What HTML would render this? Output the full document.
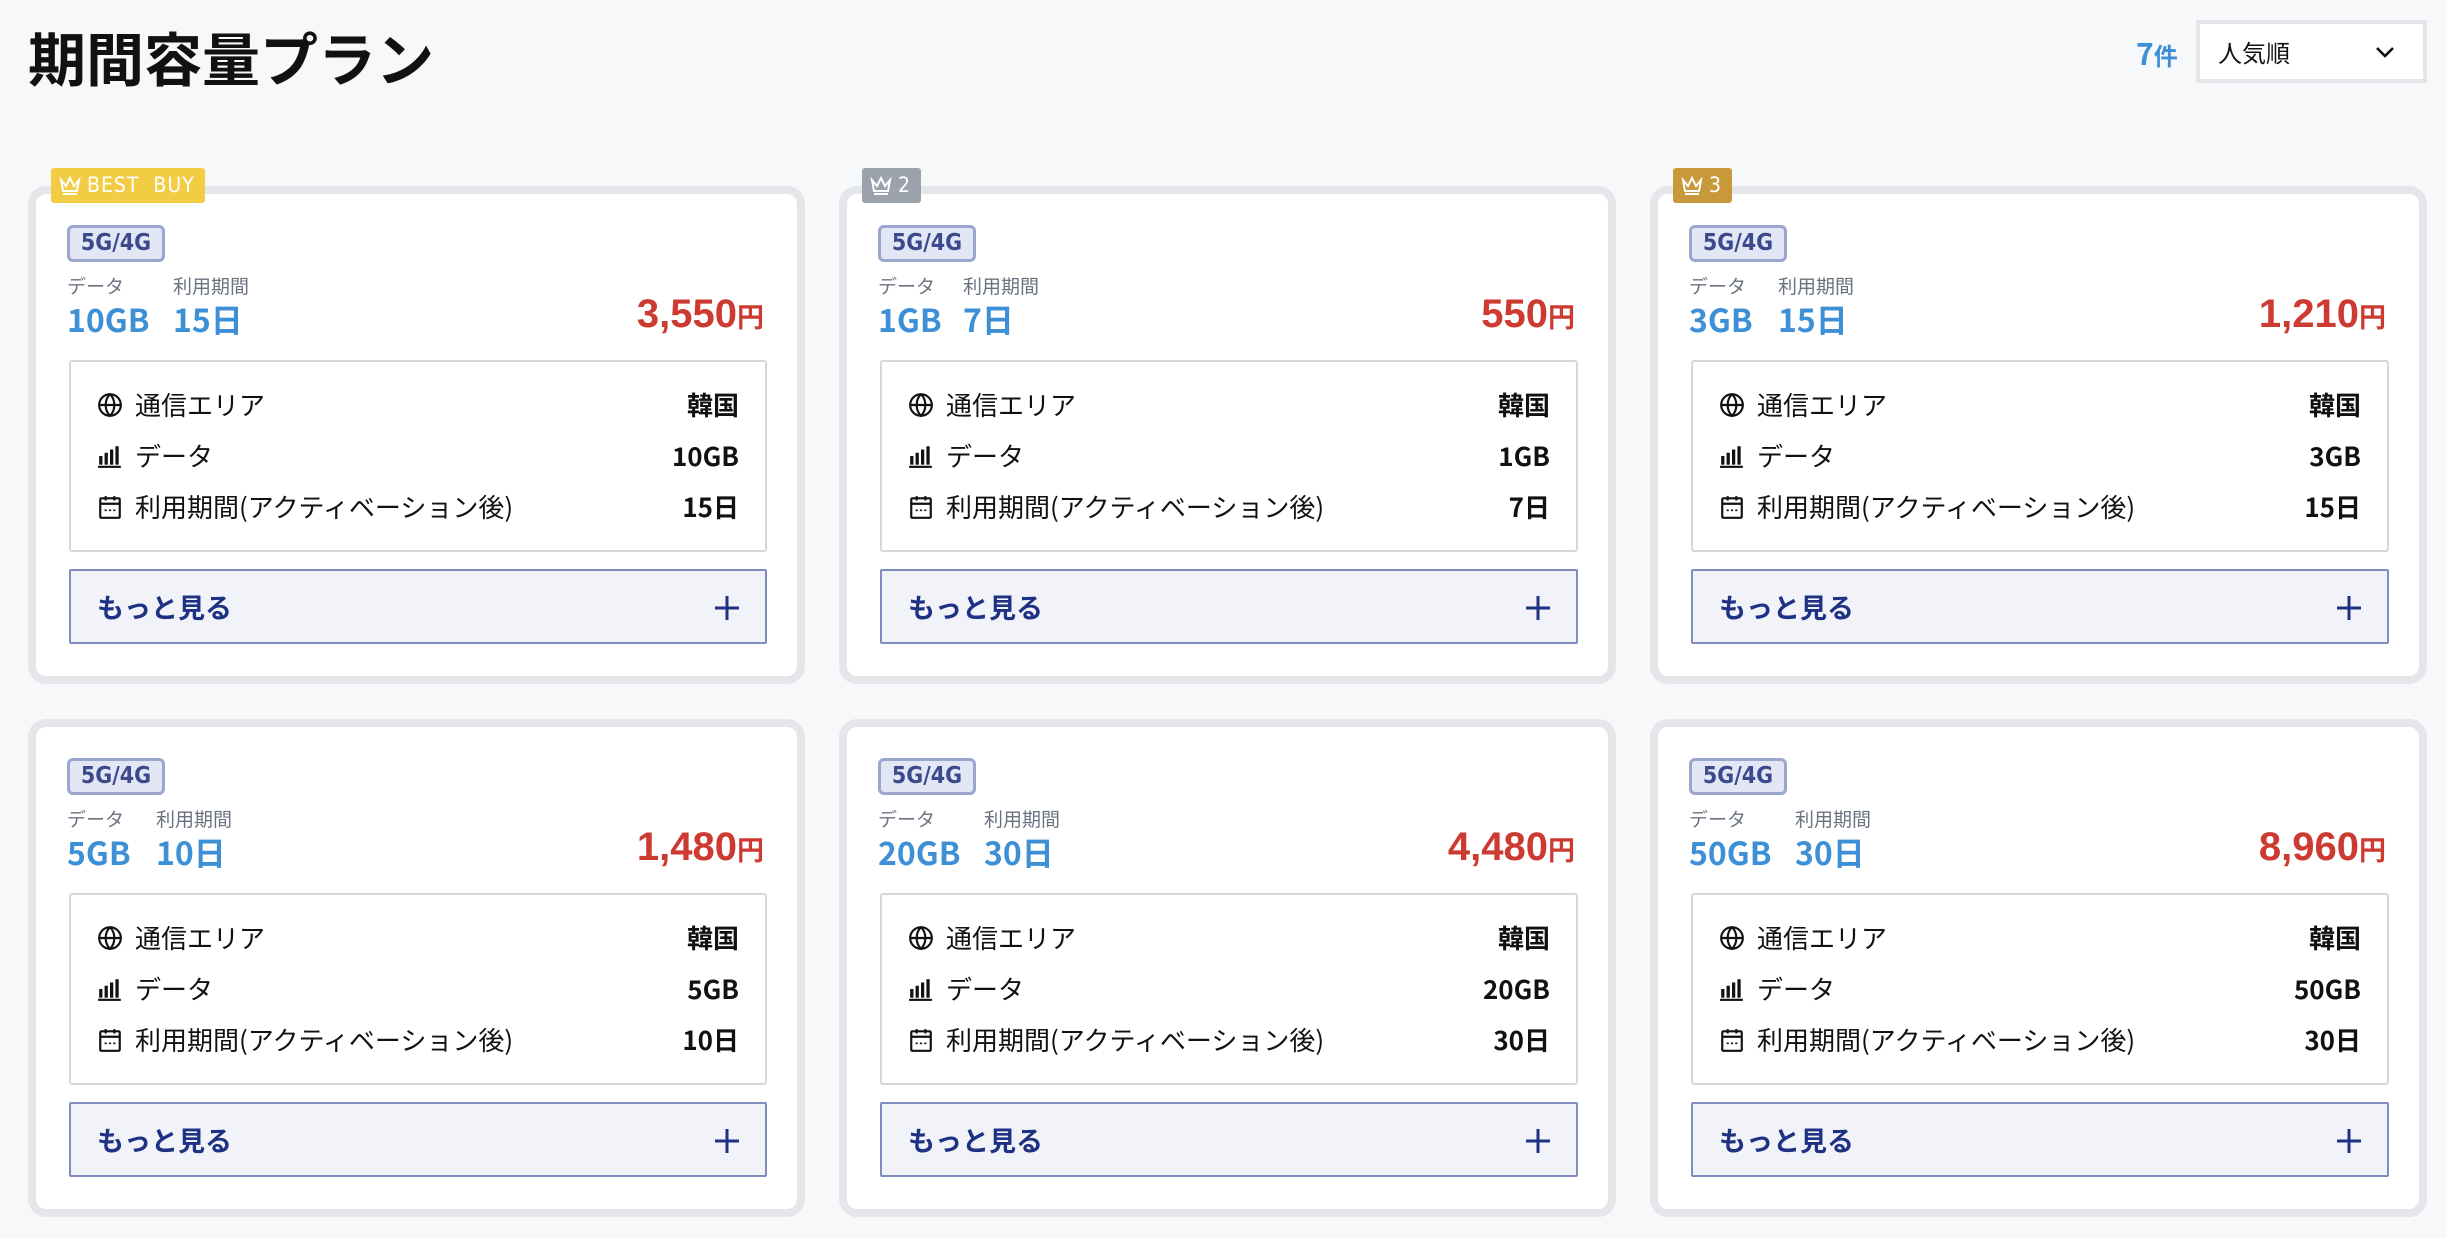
<!DOCTYPE html>
<html><head><meta charset="utf-8"><style>
*{box-sizing:border-box;margin:0;padding:0}
body{width:2446px;height:1238px;background:#f7f8fa;font-family:"Liberation Sans","Noto Sans CJK JP",sans-serif;position:relative;overflow:hidden;color:#111}
h1{position:absolute;left:28px;top:14px;font-size:58px;font-weight:700;letter-spacing:0px;font-family:"Noto Sans CJK JP",sans-serif}
.cnt{position:absolute;left:2136px;top:30px;color:#3d8fd6;font-size:30px;font-weight:700;font-family:"Noto Sans CJK JP",sans-serif}
.cnt small{font-size:24px}
.sel{position:absolute;left:2196px;top:20px;width:231px;height:63px;background:#fff;border:4px solid #e3e5e9;font-size:24px;padding:12px 0 0 18px;font-family:"Noto Sans CJK JP",sans-serif;line-height:32px}
.sel svg{position:absolute;right:28px;top:22px}
.card{position:absolute;width:777px;height:498px;background:#fff;border:8px solid #e4e6ea;border-radius:18px;font-family:"Noto Sans CJK JP",sans-serif}
.badge{position:absolute;left:15px;top:-26px;height:35px;color:#fff;font-size:21px;line-height:35px;padding:0 10px 0 8px;border-radius:3px;display:flex;align-items:center;gap:6px;font-family:"DejaVu Sans Condensed","Liberation Sans",sans-serif;letter-spacing:1px}
.tag{position:absolute;left:31px;top:31px;width:98px;height:37px;background:#e2e6f5;border:3px solid #9ba6cf;border-radius:6px;color:#3c4a8c;font-weight:700;font-size:23px;text-align:center;line-height:31px;font-family:"DejaVu Sans Condensed",sans-serif}
.lab{position:absolute;top:78px;font-size:19px;color:#6b7280}
.val{position:absolute;top:102px;font-size:32px;color:#3d8fd6;font-weight:700}
.price{position:absolute;right:33px;top:98px;font-size:40px;color:#cc3a31;font-weight:700;font-family:"Liberation Sans","Noto Sans CJK JP",sans-serif}
.price span{font-size:27px;font-family:"Noto Sans CJK JP",sans-serif}
.box{position:absolute;left:33px;top:166px;width:698px;height:192px;border:2px solid #d6d8dc;border-radius:3px;padding:17px 26px 0 26px}
.row{display:flex;align-items:center;height:51px;font-size:26px}
.row svg{margin-right:12px;flex:none}
.row .r{margin-left:auto;font-weight:700}
.btn{position:absolute;left:33px;top:375px;width:698px;height:75px;background:#f1f3f9;border:2px solid #7f8cc0;border-radius:2px;color:#1e3183;font-weight:700;font-size:27px;padding-left:26px;line-height:71px}
.btn svg{position:absolute;right:26px;top:25px}
</style></head><body>
<h1>期間容量プラン</h1>
<div class="cnt">7<small>件</small></div>
<div class="sel">人気順<svg width="20" height="12" viewBox="0 0 20 12"><path d="M2 2l8 8 8-8" stroke="#111" stroke-width="2.6" fill="none"/></svg></div>

<div class="card" style="left:28px;top:186px">
<div class="badge" style="background:#f2cc42"><svg width="22" height="20" viewBox="0 0 22 20"><path d="M2 4l5 6 4-8 4 8 5-6-2 11H4z M4 18h14" stroke="#fff" stroke-width="2" fill="none"/></svg>BEST&nbsp; BUY</div>
<div class="tag">5G/4G</div><div class="lab" style="left:31px">データ</div><div class="lab" style="left:137px">利用期間</div>
<div class="val" style="left:31px">10GB</div><div class="val" style="left:137px">15日</div>
<div class="price">3,550<span>円</span></div>
<div class="box">
<div class="row"><svg width="26" height="26" viewBox="0 0 24 24" fill="none" stroke="#111" stroke-width="2"><circle cx="12" cy="12" r="10"/><path d="M2 12h20M12 2c3 3 4 7 4 10s-1 7-4 10c-3-3-4-7-4-10s1-7 4-10"/></svg>通信エリア<span class="r">韓国</span></div>
<div class="row"><svg width="26" height="26" viewBox="0 0 24 24" fill="#111"><rect x="2" y="12" width="3" height="8"/><rect x="7" y="9" width="3" height="11"/><rect x="12" y="6" width="3" height="14"/><rect x="17" y="3" width="3" height="17"/><rect x="1" y="21" width="21" height="2"/></svg>データ<span class="r">10GB</span></div>
<div class="row"><svg width="26" height="26" viewBox="0 0 24 24" fill="none" stroke="#111" stroke-width="2"><rect x="3" y="4" width="18" height="18" rx="1"/><path d="M3 9h18M8 2v4M16 2v4"/><path d="M7 15h2M11 15h2M15 15h2" stroke-width="1.5"/></svg>利用期間(アクティベーション後)<span class="r">15日</span></div>
</div>
<div class="btn">もっと見る<svg width="24" height="24" viewBox="0 0 24 24"><path d="M12 0v24M0 12h24" stroke="#1e3183" stroke-width="3"/></svg></div>
</div>

<div class="card" style="left:839px;top:186px">
<div class="badge" style="background:#9ca2ab"><svg width="22" height="20" viewBox="0 0 22 20"><path d="M2 4l5 6 4-8 4 8 5-6-2 11H4z M4 18h14" stroke="#fff" stroke-width="2" fill="none"/></svg>2</div>
<div class="tag">5G/4G</div><div class="lab" style="left:31px">データ</div><div class="lab" style="left:116px">利用期間</div>
<div class="val" style="left:31px">1GB</div><div class="val" style="left:116px">7日</div>
<div class="price">550<span>円</span></div>
<div class="box">
<div class="row"><svg width="26" height="26" viewBox="0 0 24 24" fill="none" stroke="#111" stroke-width="2"><circle cx="12" cy="12" r="10"/><path d="M2 12h20M12 2c3 3 4 7 4 10s-1 7-4 10c-3-3-4-7-4-10s1-7 4-10"/></svg>通信エリア<span class="r">韓国</span></div>
<div class="row"><svg width="26" height="26" viewBox="0 0 24 24" fill="#111"><rect x="2" y="12" width="3" height="8"/><rect x="7" y="9" width="3" height="11"/><rect x="12" y="6" width="3" height="14"/><rect x="17" y="3" width="3" height="17"/><rect x="1" y="21" width="21" height="2"/></svg>データ<span class="r">1GB</span></div>
<div class="row"><svg width="26" height="26" viewBox="0 0 24 24" fill="none" stroke="#111" stroke-width="2"><rect x="3" y="4" width="18" height="18" rx="1"/><path d="M3 9h18M8 2v4M16 2v4"/><path d="M7 15h2M11 15h2M15 15h2" stroke-width="1.5"/></svg>利用期間(アクティベーション後)<span class="r">7日</span></div>
</div>
<div class="btn">もっと見る<svg width="24" height="24" viewBox="0 0 24 24"><path d="M12 0v24M0 12h24" stroke="#1e3183" stroke-width="3"/></svg></div>
</div>

<div class="card" style="left:1650px;top:186px">
<div class="badge" style="background:#c8993a"><svg width="22" height="20" viewBox="0 0 22 20"><path d="M2 4l5 6 4-8 4 8 5-6-2 11H4z M4 18h14" stroke="#fff" stroke-width="2" fill="none"/></svg>3</div>
<div class="tag">5G/4G</div><div class="lab" style="left:31px">データ</div><div class="lab" style="left:120px">利用期間</div>
<div class="val" style="left:31px">3GB</div><div class="val" style="left:120px">15日</div>
<div class="price">1,210<span>円</span></div>
<div class="box">
<div class="row"><svg width="26" height="26" viewBox="0 0 24 24" fill="none" stroke="#111" stroke-width="2"><circle cx="12" cy="12" r="10"/><path d="M2 12h20M12 2c3 3 4 7 4 10s-1 7-4 10c-3-3-4-7-4-10s1-7 4-10"/></svg>通信エリア<span class="r">韓国</span></div>
<div class="row"><svg width="26" height="26" viewBox="0 0 24 24" fill="#111"><rect x="2" y="12" width="3" height="8"/><rect x="7" y="9" width="3" height="11"/><rect x="12" y="6" width="3" height="14"/><rect x="17" y="3" width="3" height="17"/><rect x="1" y="21" width="21" height="2"/></svg>データ<span class="r">3GB</span></div>
<div class="row"><svg width="26" height="26" viewBox="0 0 24 24" fill="none" stroke="#111" stroke-width="2"><rect x="3" y="4" width="18" height="18" rx="1"/><path d="M3 9h18M8 2v4M16 2v4"/><path d="M7 15h2M11 15h2M15 15h2" stroke-width="1.5"/></svg>利用期間(アクティベーション後)<span class="r">15日</span></div>
</div>
<div class="btn">もっと見る<svg width="24" height="24" viewBox="0 0 24 24"><path d="M12 0v24M0 12h24" stroke="#1e3183" stroke-width="3"/></svg></div>
</div>

<div class="card" style="left:28px;top:719px">
<div class="tag">5G/4G</div><div class="lab" style="left:31px">データ</div><div class="lab" style="left:120px">利用期間</div>
<div class="val" style="left:31px">5GB</div><div class="val" style="left:120px">10日</div>
<div class="price">1,480<span>円</span></div>
<div class="box">
<div class="row"><svg width="26" height="26" viewBox="0 0 24 24" fill="none" stroke="#111" stroke-width="2"><circle cx="12" cy="12" r="10"/><path d="M2 12h20M12 2c3 3 4 7 4 10s-1 7-4 10c-3-3-4-7-4-10s1-7 4-10"/></svg>通信エリア<span class="r">韓国</span></div>
<div class="row"><svg width="26" height="26" viewBox="0 0 24 24" fill="#111"><rect x="2" y="12" width="3" height="8"/><rect x="7" y="9" width="3" height="11"/><rect x="12" y="6" width="3" height="14"/><rect x="17" y="3" width="3" height="17"/><rect x="1" y="21" width="21" height="2"/></svg>データ<span class="r">5GB</span></div>
<div class="row"><svg width="26" height="26" viewBox="0 0 24 24" fill="none" stroke="#111" stroke-width="2"><rect x="3" y="4" width="18" height="18" rx="1"/><path d="M3 9h18M8 2v4M16 2v4"/><path d="M7 15h2M11 15h2M15 15h2" stroke-width="1.5"/></svg>利用期間(アクティベーション後)<span class="r">10日</span></div>
</div>
<div class="btn">もっと見る<svg width="24" height="24" viewBox="0 0 24 24"><path d="M12 0v24M0 12h24" stroke="#1e3183" stroke-width="3"/></svg></div>
</div>

<div class="card" style="left:839px;top:719px">
<div class="tag">5G/4G</div><div class="lab" style="left:31px">データ</div><div class="lab" style="left:137px">利用期間</div>
<div class="val" style="left:31px">20GB</div><div class="val" style="left:137px">30日</div>
<div class="price">4,480<span>円</span></div>
<div class="box">
<div class="row"><svg width="26" height="26" viewBox="0 0 24 24" fill="none" stroke="#111" stroke-width="2"><circle cx="12" cy="12" r="10"/><path d="M2 12h20M12 2c3 3 4 7 4 10s-1 7-4 10c-3-3-4-7-4-10s1-7 4-10"/></svg>通信エリア<span class="r">韓国</span></div>
<div class="row"><svg width="26" height="26" viewBox="0 0 24 24" fill="#111"><rect x="2" y="12" width="3" height="8"/><rect x="7" y="9" width="3" height="11"/><rect x="12" y="6" width="3" height="14"/><rect x="17" y="3" width="3" height="17"/><rect x="1" y="21" width="21" height="2"/></svg>データ<span class="r">20GB</span></div>
<div class="row"><svg width="26" height="26" viewBox="0 0 24 24" fill="none" stroke="#111" stroke-width="2"><rect x="3" y="4" width="18" height="18" rx="1"/><path d="M3 9h18M8 2v4M16 2v4"/><path d="M7 15h2M11 15h2M15 15h2" stroke-width="1.5"/></svg>利用期間(アクティベーション後)<span class="r">30日</span></div>
</div>
<div class="btn">もっと見る<svg width="24" height="24" viewBox="0 0 24 24"><path d="M12 0v24M0 12h24" stroke="#1e3183" stroke-width="3"/></svg></div>
</div>

<div class="card" style="left:1650px;top:719px">
<div class="tag">5G/4G</div><div class="lab" style="left:31px">データ</div><div class="lab" style="left:137px">利用期間</div>
<div class="val" style="left:31px">50GB</div><div class="val" style="left:137px">30日</div>
<div class="price">8,960<span>円</span></div>
<div class="box">
<div class="row"><svg width="26" height="26" viewBox="0 0 24 24" fill="none" stroke="#111" stroke-width="2"><circle cx="12" cy="12" r="10"/><path d="M2 12h20M12 2c3 3 4 7 4 10s-1 7-4 10c-3-3-4-7-4-10s1-7 4-10"/></svg>通信エリア<span class="r">韓国</span></div>
<div class="row"><svg width="26" height="26" viewBox="0 0 24 24" fill="#111"><rect x="2" y="12" width="3" height="8"/><rect x="7" y="9" width="3" height="11"/><rect x="12" y="6" width="3" height="14"/><rect x="17" y="3" width="3" height="17"/><rect x="1" y="21" width="21" height="2"/></svg>データ<span class="r">50GB</span></div>
<div class="row"><svg width="26" height="26" viewBox="0 0 24 24" fill="none" stroke="#111" stroke-width="2"><rect x="3" y="4" width="18" height="18" rx="1"/><path d="M3 9h18M8 2v4M16 2v4"/><path d="M7 15h2M11 15h2M15 15h2" stroke-width="1.5"/></svg>利用期間(アクティベーション後)<span class="r">30日</span></div>
</div>
<div class="btn">もっと見る<svg width="24" height="24" viewBox="0 0 24 24"><path d="M12 0v24M0 12h24" stroke="#1e3183" stroke-width="3"/></svg></div>
</div>
</body></html>
